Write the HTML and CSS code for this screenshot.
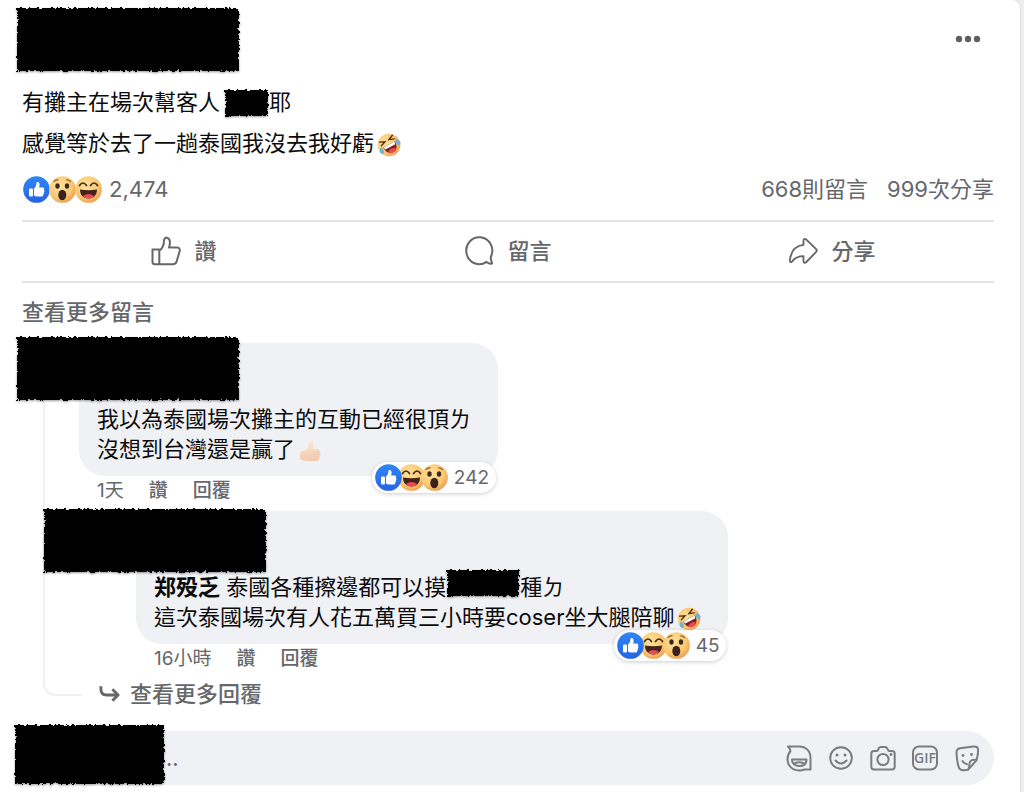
FILE: index.html
```html
<!DOCTYPE html>
<html lang="zh-Hant">
<head>
<meta charset="utf-8">
<meta name="viewport" content="width=device-width, initial-scale=1">
<title>貼文</title>
<link rel="stylesheet" href="styles.css">
</head>
<body>
<svg class="defs" width="0" height="0" aria-hidden="true">
  <defs>
    <filter id="rough" x="-5%" y="-10%" width="110%" height="120%">
      <feTurbulence type="fractalNoise" baseFrequency="0.35" numOctaves="2" seed="4" result="noise"/>
      <feDisplacementMap in="SourceGraphic" in2="noise" scale="5" xChannelSelector="R" yChannelSelector="G"/>
    </filter>
    <linearGradient id="blue" x1="0" y1="0" x2="0" y2="1"><stop offset="0" stop-color="#2f86f6"/><stop offset="1" stop-color="#2563e6"/></linearGradient>
    <radialGradient id="yellow" cx=".4" cy=".35" r=".7"><stop offset="0" stop-color="#ffe39a"/><stop offset=".65" stop-color="#f9c873"/><stop offset="1" stop-color="#ee9a4c"/></radialGradient>
    <linearGradient id="skin" x1="0" y1="0" x2="0" y2="1"><stop offset="0" stop-color="#fbe6d6"/><stop offset="1" stop-color="#f3c9ac"/></linearGradient>
    <symbol id="like" viewBox="0 0 27 27">
      <circle cx="13.500" cy="13.500" r="13.300" fill="url(#blue)"/>
      <rect x="6" y="12.500" width="4" height="8" rx="1" fill="#fff"/>
      <path d="M11 12.500c1.800-1.400 2.300-3 2.400-5.200.1-1.800 3-1.800 3.200 1 .1 1.200-.2 2.300-.5 3.200h3.600c1.500 0 2 1.500 1.200 2.400.8.700.7 1.800 0 2.400.4.900 0 1.700-.7 2.100.2 1.300-.6 2.100-1.800 2.100H14c-1.200 0-2.200-.4-3-.9z" fill="#fff"/>
    </symbol>
    <symbol id="haha" viewBox="0 0 27 27">
      <circle cx="13.500" cy="13.500" r="13.300" fill="url(#yellow)"/>
      <path d="M4.500 9.500q3.500-5 7 0M15.500 9.500q3.500-5 7 0" fill="none" stroke="#3d2a1c" stroke-width="1.700" stroke-linecap="round"/>
      <path d="M5 13.500q8.500 1.600 17 0c0 5.500-3.300 9-8.500 9S5 19 5 13.500z" fill="#44231d"/>
      <path d="M8 20q5.500-4 11 0-2 2.500-5.500 2.500T8 20z" fill="#e94a56"/>
    </symbol>
    <symbol id="wow" viewBox="0 0 27 27">
      <circle cx="13.500" cy="13.500" r="13.300" fill="url(#yellow)"/>
      <ellipse cx="8.500" cy="10" rx="2.200" ry="2.800" fill="#3b291f"/><ellipse cx="18" cy="10" rx="2.200" ry="2.800" fill="#3b291f"/>
      <path d="M5 5.500q2-2 4-1.700M17.500 3.800q2.300-.2 4 1.700" fill="none" stroke="#a9682f" stroke-width="1.300" stroke-linecap="round"/>
      <ellipse cx="13.300" cy="19" rx="4" ry="5.200" fill="#3b211b"/>
    </symbol>
    <symbol id="rofl" viewBox="0 0 24 24">
      <g transform="rotate(-28 12 12)">
        <circle cx="12" cy="12" r="11.300" fill="url(#yellow)"/>
        <path d="M5 5l5 2.200-5 1.900M19.500 5l-5 2.200 5 1.900" fill="none" stroke="#553019" stroke-width="1.400" stroke-linecap="round"/>
        <path d="M5.500 11.500h13.500c0 5.500-2.500 9-6.700 9s-6.800-3.500-6.800-9z" fill="#7a2420"/>
        <path d="M6 11.500h12.500l-.6 2.800H6.600z" fill="#fff"/>
        <path d="M7.500 18q4.500-3.200 9 0-1.700 2.500-4.500 2.500T7.500 18z" fill="#ef4a4a"/>
        <path d="M4 10q1.600 4-.2 6.500Q.8 18 .6 14q0-2 3.400-4zM20 10q-1.600 4 .2 6.500 3 1.500 3.200-2.500 0-2-3.400-4z" fill="#6fb2d6"/>
      </g>
    </symbol>
    <symbol id="thumb" viewBox="0 0 24 24">
      <path d="M2.500 13q3-2 6.500-2.500 2.300-2.500 2.100-7 .1-2.200 2-1.700 3 1 1.700 8.200h5.300q2 .3 1.500 2.200 1.600 1 .5 2.700 1 1.500-.3 2.700.6 1.700-1 2.400.1 2-2 2H10q-4 0-7.500-1.500-1.500-3.500 0-7.500z" fill="url(#skin)"/>
      <path d="M15 12.800h6M15 15.400h6M15 18h5" stroke="#efc6ab" stroke-width=".6"/>
    </symbol>
  </defs>
</svg>

<main class="card">
  <article class="post">
    <header class="post-head">
      <div class="mask mask-author"></div>
      <button class="icon-button" type="button" aria-label="更多選項">
        <svg width="26" height="8" viewBox="0 0 26 8" fill="#5f6063"><circle cx="4" cy="4" r="3.200"/><circle cx="13" cy="4" r="3.200"/><circle cx="22" cy="4" r="3.200"/></svg>
      </button>
    </header>
    <div class="post-body">
      <p>有攤主在場次幫客人<span class="mask mask-word"></span>耶</p>
      <p>感覺等於去了一趟泰國我沒去我好虧<svg class="emoji"><use href="#rofl"/></svg></p>
    </div>
    <div class="stats">
      <div class="faces">
        <svg><use href="#like"/></svg><svg><use href="#wow"/></svg><svg><use href="#haha"/></svg>
      </div>
      <span class="total">2,474</span>
      <a class="stat" href="#comments">668則留言</a>
      <a class="stat" href="#shares">999次分享</a>
    </div>
    <div class="actions">
      <button type="button">
        <svg width="30" height="30" viewBox="0 0 30 30"><path d="M1.500 13.500h6.800v14.800H4q-2.500 0-2.500-2.500zM8.300 14.500c4-2 4.700-6 4.800-10.400.1-3.500 5-3.400 5.700 1 .4 2.500-.2 4.700-.8 6.400h8.300c2.300 0 3 2.500 2.200 4.300l-2.800 9.500c-.6 2.200-2 3-4 3H8.300"/></svg>
        讚
      </button>
      <button type="button">
        <svg width="30" height="30" viewBox="0 0 30 30"><path d="M22.500 25.900A13 13.500 0 1 1 27 20.500q-.6 1.500.2 3.800l.9 3.200q-3.400.8-5.600-1.600z"/></svg>
        留言
      </button>
      <button type="button">
        <svg width="30" height="30" viewBox="0 0 32 30"><path d="M16.500 8.500V4q0-2.800 2.800-1.400L30 13q1.500 1.500 0 3L19.300 27q-2.800 1.800-2.800-1.500v-5c-5 0-9 1.500-12 5.500-1.500 1.600-2.700 1-2.500-1C3 15.500 7.500 9.500 16.500 8.500z"/></svg>
        分享
      </button>
    </div>
  </article>

  <section id="comments" class="comments">
    <button class="more" type="button">查看更多留言</button>
    <div class="thread">
      <article class="comment">
        <div class="bubble">
          <p>我以為泰國場次攤主的互動已經很頂ㄌ</p>
          <p>沒想到台灣還是贏了<svg class="emoji"><use href="#thumb"/></svg></p>
          <div class="reacts">
            <div class="faces"><svg><use href="#like"/></svg><svg><use href="#haha"/></svg><svg><use href="#wow"/></svg></div>
            <span>242</span>
          </div>
        </div>
        <div class="mask mask-name"></div>
        <div class="meta"><span>1天</span><button type="button">讚</button><button type="button">回覆</button></div>
      </article>
      <article class="comment reply">
        <div class="bubble">
          <p><b>郑殁乏</b> 泰國各種擦邊都可以摸<span class="mask mask-phrase"></span>種ㄉ</p>
          <p>這次泰國場次有人花五萬買三小時要coser坐大腿陪聊<svg class="emoji"><use href="#rofl"/></svg></p>
          <div class="reacts">
            <div class="faces"><svg><use href="#like"/></svg><svg><use href="#haha"/></svg><svg><use href="#wow"/></svg></div>
            <span>45</span>
          </div>
        </div>
        <div class="mask mask-name"></div>
        <div class="meta"><span>16小時</span><button type="button">讚</button><button type="button">回覆</button></div>
      </article>
      <button class="more more-replies" type="button">
        <svg width="21" height="20" viewBox="0 0 22 20"><path d="M2 2v3q0 6 6 6h11M14 5l6 6-6 6"/></svg>
        查看更多回覆
      </button>
    </div>
  </section>

  <form class="composer">
    <div class="mask mask-self"></div>
    <div class="field">
      <input type="text" aria-label="留言" placeholder="..">
      <button type="button" aria-label="虛擬替身貼圖"><svg viewBox="0 0 28 28"><path d="M3 2.500h11c7 0 11.500 4.500 11.500 11.500v11.500h-6q-2.500.9-5.500.9C7 26.400 2.500 21.500 2.500 15q0-4.500 3-8Q5.300 4.500 3 2.500zM7 15.500h14.500c0 4.500-3 6.500-7 6.500s-7.500-2-7.500-6.500zM9.500 19.500q4.700-2.500 9.500 0"/></svg></button>
      <button type="button" aria-label="表情符號"><svg viewBox="0 0 28 28"><circle cx="14" cy="14" r="10.800"/><path d="M8.500 16.500q5.500 6 11 0"/><circle class="dot" cx="10" cy="11" r="1.500"/><circle class="dot" cx="18" cy="11" r="1.500"/></svg></button>
      <button type="button" aria-label="相片"><svg viewBox="0 0 28 28"><path d="M5 7h2.500q1 0 1.500-1l.8-1.700q.6-1.300 2-1.300h4.400q1.400 0 2 1.300L19 6q.5 1 1.500 1H23q2.700 0 2.700 2.700v13q0 2.700-2.700 2.700H5q-2.700 0-2.700-2.700v-13Q2.300 7 5 7z"/><circle cx="14" cy="15.500" r="5.600"/><circle class="dot" cx="22" cy="10.500" r="1.400"/></svg></button>
      <button type="button" aria-label="GIF"><svg viewBox="0 0 28 28"><rect x="2" y="2.500" width="24" height="23" rx="6"/><text class="gif" x="14" y="19" text-anchor="middle">GIF</text></svg></button>
      <button type="button" aria-label="貼圖"><svg viewBox="0 0 28 28"><path d="M7 4.200l13.500-1.700q4.500-.5 4.600 3.500 0 5-1.600 10.300L15 25.800l-4 .4q-4.500.3-5.500-3.700Q3.700 16 3.500 8.500 3.500 4.800 7 4.200zM23.500 16q-7-1-7 4 0 3.500-1.500 5.800M9.500 17q2 3 4.500 3.200"/><circle class="dot" cx="10" cy="11.500" r="1.400"/><circle class="dot" cx="18.500" cy="10.500" r="1.400"/></svg></button>
    </div>
  </form>
</main>
</body>
</html>
```
FILE: styles.css
```css
* {
  box-sizing: border-box;
}

body {
  margin: 0;
  background: #efeff3;
  color: #0b0b0c;
  font: 22px/30px Inter, "Noto Sans CJK TC", sans-serif;
}

p {
  margin: 0;
}

button {
  padding: 0;
  border: 0;
  background: none;
  color: #65676b;
  font: inherit;
  font-weight: 500;
  cursor: pointer;
}

.defs {
  position: absolute;
}

.card {
  min-height: 100vh;
  margin-right: 4px;
  padding: 8px 26px 7px 22px;
  border-radius: 0 8px 0 0;
  background: #fff;
  box-shadow: 0 0 3px #c9c9ce;
}

.mask {
  background: #000;
  filter: url(#rough) drop-shadow(0 1px 1px #0006);
}

.emoji {
  width: 24px;
  height: 24px;
  margin-left: 3px;
  vertical-align: -6px;
}

/* Post */
.post-head {
  display: flex;
  justify-content: space-between;
  align-items: flex-start;
}

.mask-author {
  width: 222px;
  height: 63px;
  margin: 0 0 1px -5px;
}

.icon-button {
  display: flex;
  margin: 27px 13px 0 0;
}

.post-body {
  padding-top: 10px;
  line-height: 41px;
}

.mask-word,
.mask-phrase {
  display: inline-block;
  height: 26px;
  vertical-align: middle;
}

.mask-word {
  width: 43px;
  margin: 0 1px 2px 5px;
}

.mask-phrase {
  width: 72px;
  margin: -8px 1px 4px;
}

.faces {
  display: flex;
}

.faces svg {
  width: 27px;
  height: 27px;
}

.stats {
  display: flex;
  align-items: center;
  gap: 19px;
  height: 56px;
  padding-bottom: 6px;
  color: #65676b;
}

.stats .faces {
  margin: 0 -12px 0 1px;
}

.stats .faces svg + svg {
  margin-left: -1px;
}

.total {
  flex: 1;
}

.stat {
  color: inherit;
  text-decoration: none;
}

.actions {
  display: grid;
  grid-template-columns: repeat(3, 1fr);
  border-top: 2px solid #e2e2e4;
  border-bottom: 2px solid #e2e2e4;
}

.actions button {
  display: flex;
  justify-content: center;
  align-items: center;
  gap: 13px;
  height: 59px;
  padding-bottom: 1px;
}

.actions svg,
.more svg {
  fill: none;
  stroke: #65676b;
  stroke-width: 2;
  stroke-linejoin: round;
}

/* Comments */
.more {
  display: flex;
  align-items: center;
  gap: 10px;
}

.comments > .more {
  margin: 14px 0 16px;
}

.thread {
  position: relative;
}

.thread::before {
  content: "";
  position: absolute;
  top: 50px;
  bottom: 13px;
  left: 21px;
  width: 37px;
  border: 2px solid #f0f0f2;
  border-width: 0 0 2px 2px;
  border-radius: 0 0 0 12px;
}

.comment {
  position: relative;
  padding-left: 57px;
}

.reply {
  margin-top: 5px;
  padding-left: 114px;
}

.bubble {
  position: relative;
  width: fit-content;
  padding: 61px 27px 12px 18px;
  border-radius: 26px;
  background: #f0f1f5;
}

.mask-name {
  position: absolute;
  top: -6px;
  left: -5px;
  width: 222px;
  height: 63px;
}

.reply .mask-name {
  top: -2px;
  left: 22px;
}

.reacts {
  position: absolute;
  right: 2px;
  bottom: -17px;
  display: flex;
  align-items: center;
  gap: 6px;
  padding: 2px 7px 2px 3px;
  border-radius: 16px;
  background: #fff;
  box-shadow: 0 1px 4px #0003;
  color: #65676b;
  font-size: 19px;
  line-height: 27px;
}

.reacts .faces svg + svg {
  margin-left: -4px;
}

.reacts .faces svg:first-child {
  z-index: 1;
}

.meta {
  display: flex;
  gap: 25px;
  padding-left: 18px;
  color: #65676b;
  font-size: 19px;
}

.more-replies {
  margin: 5px 0 1px 77px;
}

.more-replies svg {
  stroke-width: 3;
}

/* Composer */
.composer {
  position: relative;
  padding: 21px 0 0 58px;
}

.field {
  display: flex;
  align-items: center;
  gap: 14px;
  height: 54px;
  padding: 0 13px 0 86px;
  border-radius: 27px;
  background: #f0f1f5;
}

.field input {
  flex: 1;
  min-width: 0;
  padding: 0;
  border: 0;
  outline: 0;
  background: none;
  font: inherit;
}

.field input::placeholder {
  color: #65676b;
  opacity: 1;
}

.field button {
  display: flex;
}

.field svg {
  width: 28px;
  height: 28px;
  fill: none;
  stroke: #7a7c81;
  stroke-width: 2;
  stroke-linejoin: round;
  stroke-linecap: round;
}

.field .dot,
.field .gif {
  fill: #7a7c81;
  stroke: none;
}

.field .gif {
  font: 600 14px "Open Sans", sans-serif;
}

.mask-self {
  position: absolute;
  z-index: 1;
  top: 15px;
  left: -7px;
  width: 149px;
  height: 59px;
}
```
